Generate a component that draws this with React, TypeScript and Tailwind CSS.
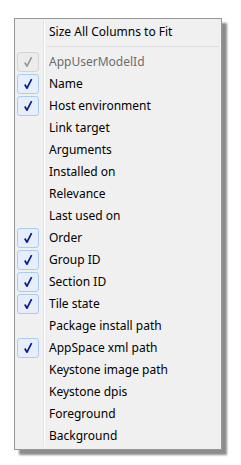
const items: { label: string; checked?: boolean; disabled?: boolean }[] = [
  { label: 'AppUserModelId', checked: true, disabled: true },
  { label: 'Name', checked: true },
  { label: 'Host environment', checked: true },
  { label: 'Link target' },
  { label: 'Arguments' },
  { label: 'Installed on' },
  { label: 'Relevance' },
  { label: 'Last used on' },
  { label: 'Order', checked: true },
  { label: 'Group ID', checked: true },
  { label: 'Section ID', checked: true },
  { label: 'Tile state', checked: true },
  { label: 'Package install path' },
  { label: 'AppSpace xml path', checked: true },
  { label: 'Keystone image path' },
  { label: 'Keystone dpis' },
  { label: 'Foreground' },
  { label: 'Background' },
];

function Check({ disabled }: { disabled?: boolean }) {
  return (
    <div
      className={`flex h-[20px] w-[22px] items-center justify-center rounded-[3px] border ${
        disabled ? 'border-[#d4d4d4] bg-[#ececec]' : 'border-[#aecbef] bg-[#e6eefb]'
      }`}
    >
      <svg width="10" height="12" viewBox="0 0 10 12">
        <path
          d="M1.8 6.5 L4 10.2 L8.6 1.2"
          fill="none"
          stroke={disabled ? '#9a9a9a' : '#0a1b8f'}
          strokeWidth="1.7"
          strokeLinejoin="round"
        />
      </svg>
    </div>
  );
}

function Gutter({ children }: { children?: React.ReactNode }) {
  return (
    <div className="flex w-[29px] shrink-0 items-center self-stretch border-r border-[#e2e3e3] pl-[2px] shadow-[1px_0_0_#ffffff]">
      {children}
    </div>
  );
}

export default function App() {
  return (
    <div
      className="h-[465px] w-[241px] bg-white pl-[14px] pt-[18px]"
      style={{ fontFamily: '"Noto Sans", "Open Sans", sans-serif' }}
    >
      <div className="flex h-[432px] w-[208px] flex-col border border-[#979797] bg-[#f0f0f0] py-[1px] text-[12px] text-black shadow-[5px_5px_2px_rgba(0,0,0,0.45)]">
        <div className="flex h-[23px]">
          <Gutter />
          <span className="flex items-center pl-[5px]">Size All Columns to Fit</span>
        </div>
        <div className="flex h-[8px]">
          <Gutter />
          <div className="ml-[3px] mr-[2px] mt-[3px] h-[2px] flex-1 border-t border-[#dcdcdc] border-b-white" />
        </div>
        {items.map((it) => (
          <div key={it.label} className="flex h-[22px]">
            <Gutter>{it.checked && <Check disabled={it.disabled} />}</Gutter>
            <span className={`flex items-center pl-[5px] ${it.disabled ? 'text-[#6d6d6d]' : ''}`}>
              {it.label}
            </span>
          </div>
        ))}
      </div>
    </div>
  );
}
